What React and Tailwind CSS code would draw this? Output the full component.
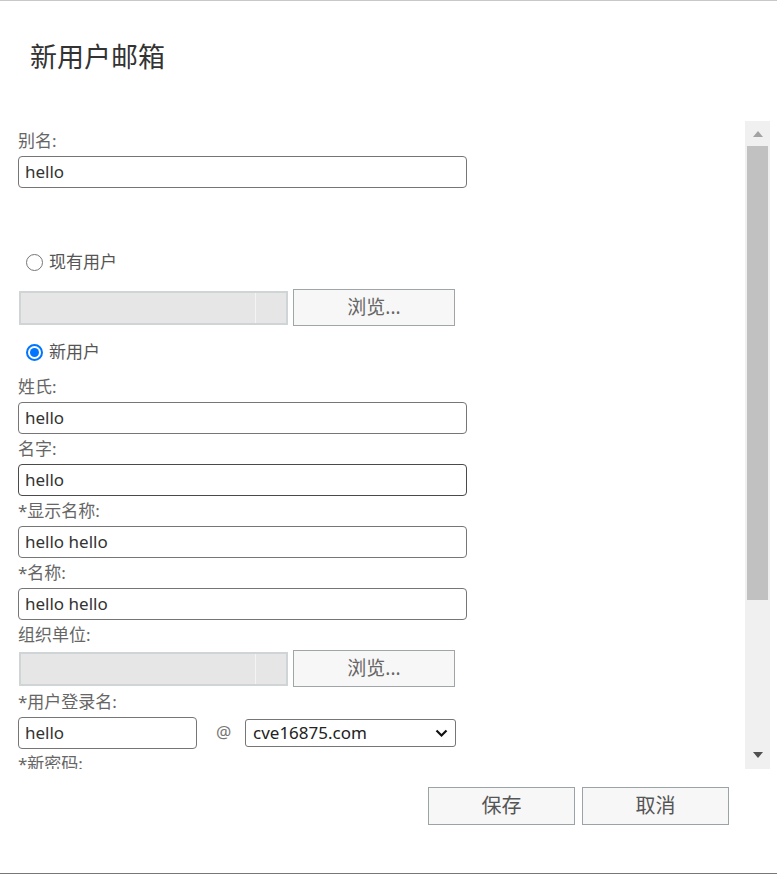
import React from 'react';

const font = { fontFamily: '"Noto Sans", "Noto Sans CJK SC", sans-serif' };

function Label({ children }) {
  return <div className="h-[30px] leading-[30px] text-[17px] text-[#666]">{children}</div>;
}

function TextBox({ value, width = 'w-[449px]', dark }) {
  return (
    <div
      className={`${width} h-[32px] rounded-[4px] border ${dark ? 'border-[#4a4a4a]' : 'border-[#767676]'} bg-white pl-[6px] flex items-center text-[17px] text-[#333]`}
    >
      {value}
    </div>
  );
}

function BrowseRow() {
  return (
    <div className="flex items-center h-[37px]">
      <div className="ml-[1px] w-[269px] h-[34px] bg-[#e6e6e6] border-2 border-[#cfd4d6] flex">
        <div className="w-[235px] border-r border-[#f4f4f4]" />
      </div>
      <button className="ml-[5px] w-[162px] h-[37px] bg-[#f7f7f7] border border-[#a0a6a8] text-[19px] text-[#666] leading-none">
        浏览...
      </button>
    </div>
  );
}

function Radio({ checked, label }) {
  return (
    <div className="flex items-center h-[30px] pl-[8px] gap-[6px] text-[17px] text-[#555]">
      {checked ? (
        <span className="w-[17px] h-[17px] rounded-full border-2 border-[#0075ff] flex items-center justify-center">
          <span className="w-[9px] h-[9px] rounded-full bg-[#0075ff]" />
        </span>
      ) : (
        <span className="w-[17px] h-[17px] rounded-full border border-[#767676] bg-white" />
      )}
      <span>{label}</span>
    </div>
  );
}

export default function App() {
  return (
    <div
      className="w-[777px] h-[874px] bg-white border-t border-t-[#c8c8c8] border-b border-b-[#777] flex flex-col"
      style={font}
    >
      {/* Title */}
      <div className="h-[120px] pl-[30px] pt-[39px] text-[27px] leading-[34px] text-[#333]">新用户邮箱</div>

      {/* Scrolling form */}
      <div className="flex h-[648px] pr-[7px]">
        <div className="flex-1 overflow-hidden pl-[18px] pt-[5px]">
          <Label>别名:</Label>
          <TextBox value="hello" />

          <div className="mt-[59px]">
            <Radio label="现有用户" />
          </div>
          <div className="mt-[12px]">
            <BrowseRow />
          </div>

          <div className="mt-[11px]">
            <Radio checked label="新用户" />
          </div>
          <div className="mt-[5px]">
            <Label>姓氏:</Label>
            <TextBox value="hello" />
            <Label>名字:</Label>
            <TextBox value="hello" dark />
            <Label>*显示名称:</Label>
            <TextBox value="hello hello" />
            <Label>*名称:</Label>
            <TextBox value="hello hello" />
            <Label>组织单位:</Label>
            <BrowseRow />
            <Label>*用户登录名:</Label>
            <div className="flex items-center">
              <TextBox value="hello" width="w-[179px]" />
              <span className="ml-[19px] w-[29px] text-[17px] text-[#777] leading-none -mt-[4px]">@</span>
              <div className="w-[211px] h-[28px] rounded-[3px] border border-[#767676] flex items-center justify-between pl-[7px] pr-[7px] text-[17px] text-[#222]">
                <span>cve16875.com</span>
                <svg width="13" height="12" viewBox="0 0 13 12">
                  <path d="M1.5 3.5 L6.5 8.5 L11.5 3.5" fill="none" stroke="#111" strokeWidth="2.2" />
                </svg>
              </div>
            </div>
            <Label>*新密码:</Label>
            <div className="h-[32px]" />
          </div>
        </div>

        {/* Scrollbar */}
        <div className="w-[25px] bg-[#f0f0f0] flex flex-col items-center">
          <div className="h-[25px] flex items-center justify-center">
            <svg width="10" height="6" viewBox="0 0 10 6">
              <path d="M0 6 L5 0 L10 6 Z" fill="#a3a3a3" />
            </svg>
          </div>
          <div className="w-[21px] h-[454px] bg-[#c1c1c1]" />
          <div className="flex-1" />
          <div className="h-[28px] flex items-center justify-center">
            <svg width="10" height="6" viewBox="0 0 10 6">
              <path d="M0 0 L10 0 L5 6 Z" fill="#505050" />
            </svg>
          </div>
        </div>
      </div>

      {/* Actions */}
      <div className="flex justify-end gap-[7px] pr-[48px] pt-[18px]">
        <button className="w-[147px] h-[38px] bg-[#f7f7f7] border border-[#9aa3a6] text-[20px] text-[#555] leading-none">
          保存
        </button>
        <button className="w-[147px] h-[38px] bg-[#f7f7f7] border border-[#9aa3a6] text-[20px] text-[#555] leading-none">
          取消
        </button>
      </div>
    </div>
  );
}
